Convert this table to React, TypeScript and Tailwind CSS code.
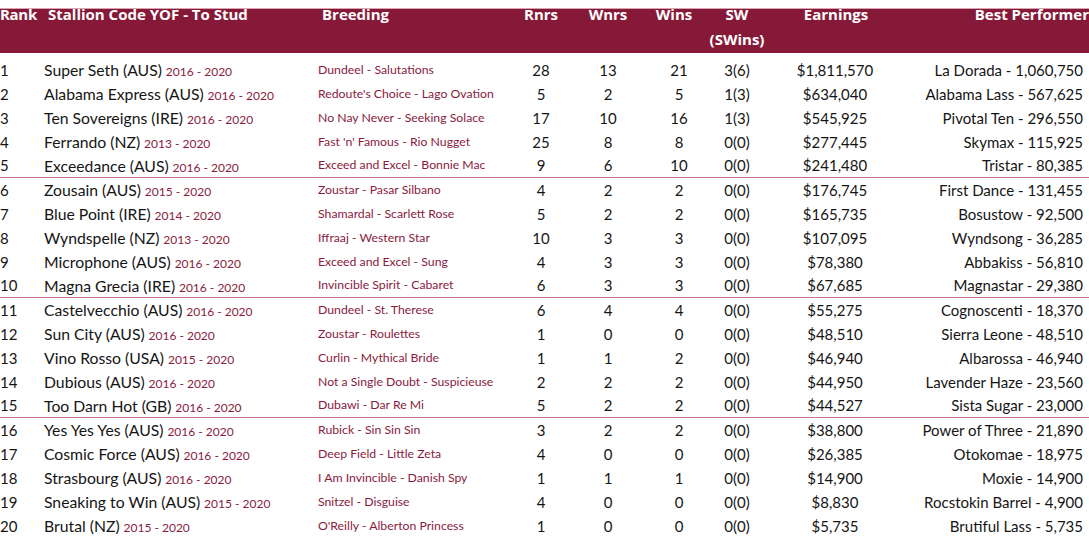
import React from 'react';

const rows = [
  ['1', 'Super Seth (AUS)', '2016 - 2020', 'Dundeel - Salutations', '28', '13', '21', '3(6)', '$1,811,570', 'La Dorada - 1,060,750'],
  ['2', 'Alabama Express (AUS)', '2016 - 2020', "Redoute's Choice - Lago Ovation", '5', '2', '5', '1(3)', '$634,040', 'Alabama Lass - 567,625'],
  ['3', 'Ten Sovereigns (IRE)', '2016 - 2020', 'No Nay Never - Seeking Solace', '17', '10', '16', '1(3)', '$545,925', 'Pivotal Ten - 296,550'],
  ['4', 'Ferrando (NZ)', '2013 - 2020', "Fast 'n' Famous - Rio Nugget", '25', '8', '8', '0(0)', '$277,445', 'Skymax - 115,925'],
  ['5', 'Exceedance (AUS)', '2016 - 2020', 'Exceed and Excel - Bonnie Mac', '9', '6', '10', '0(0)', '$241,480', 'Tristar - 80,385'],
  ['6', 'Zousain (AUS)', '2015 - 2020', 'Zoustar - Pasar Silbano', '4', '2', '2', '0(0)', '$176,745', 'First Dance - 131,455'],
  ['7', 'Blue Point (IRE)', '2014 - 2020', 'Shamardal - Scarlett Rose', '5', '2', '2', '0(0)', '$165,735', 'Bosustow - 92,500'],
  ['8', 'Wyndspelle (NZ)', '2013 - 2020', 'Iffraaj - Western Star', '10', '3', '3', '0(0)', '$107,095', 'Wyndsong - 36,285'],
  ['9', 'Microphone (AUS)', '2016 - 2020', 'Exceed and Excel - Sung', '4', '3', '3', '0(0)', '$78,380', 'Abbakiss - 56,810'],
  ['10', 'Magna Grecia (IRE)', '2016 - 2020', 'Invincible Spirit - Cabaret', '6', '3', '3', '0(0)', '$67,685', 'Magnastar - 29,380'],
  ['11', 'Castelvecchio (AUS)', '2016 - 2020', 'Dundeel - St. Therese', '6', '4', '4', '0(0)', '$55,275', 'Cognoscenti - 18,370'],
  ['12', 'Sun City (AUS)', '2016 - 2020', 'Zoustar - Roulettes', '1', '0', '0', '0(0)', '$48,510', 'Sierra Leone - 48,510'],
  ['13', 'Vino Rosso (USA)', '2015 - 2020', 'Curlin - Mythical Bride', '1', '1', '2', '0(0)', '$46,940', 'Albarossa - 46,940'],
  ['14', 'Dubious (AUS)', '2016 - 2020', 'Not a Single Doubt - Suspicieuse', '2', '2', '2', '0(0)', '$44,950', 'Lavender Haze - 23,560'],
  ['15', 'Too Darn Hot (GB)', '2016 - 2020', 'Dubawi - Dar Re Mi', '5', '2', '2', '0(0)', '$44,527', 'Sista Sugar - 23,000'],
  ['16', 'Yes Yes Yes (AUS)', '2016 - 2020', 'Rubick - Sin Sin Sin', '3', '2', '2', '0(0)', '$38,800', 'Power of Three - 21,890'],
  ['17', 'Cosmic Force (AUS)', '2016 - 2020', 'Deep Field - Little Zeta', '4', '0', '0', '0(0)', '$26,385', 'Otokomae - 18,975'],
  ['18', 'Strasbourg (AUS)', '2016 - 2020', 'I Am Invincible - Danish Spy', '1', '1', '1', '0(0)', '$14,900', 'Moxie - 14,900'],
  ['19', 'Sneaking to Win (AUS)', '2015 - 2020', 'Snitzel - Disguise', '4', '0', '0', '0(0)', '$8,830', 'Rocstokin Barrel - 4,900'],
  ['20', 'Brutal (NZ)', '2015 - 2020', "O'Reilly - Alberton Princess", '1', '0', '0', '0(0)', '$5,735', 'Brutiful Lass - 5,735'],
];

const App: React.FC = () => {
  return (
    <div className="w-[1089px] h-[555px] bg-white overflow-hidden font-['Lato',sans-serif] text-[#151515]">
      {/* header band */}
      <div className="mt-[8px] h-[45px] bg-[#861937] border-t border-[#d9a3b1] text-white font-bold text-[15px] font-['Open_Sans',sans-serif]">
        <div className="flex -mt-[7px] leading-[25px]">
          <div className="w-[44px] tracking-[-0.3px]">Rank</div>
          <div className="w-[274px] pl-[4px] whitespace-nowrap">Stallion Code YOF - To Stud</div>
          <div className="w-[192px] pl-[4px]">Breeding</div>
          <div className="w-[62px] text-center">Rnrs</div>
          <div className="w-[72px] text-center">Wnrs</div>
          <div className="w-[70px] text-center pr-[10px]">Wins</div>
          <div className="w-[46px] text-center whitespace-nowrap flex flex-col items-center">
            <span>SW</span>
            <span>(SWins)</span>
          </div>
          <div className="w-[150px] text-center pl-[2px]">Earnings</div>
          <div className="flex-1 text-right whitespace-nowrap">Best Performer</div>
        </div>
      </div>

      <div className="pt-[5px]">
        {rows.map((r, i) => (
          <div
            key={r[0]}
            className={
              'flex items-center h-[24px] text-[15px] ' +
              (i === 4 || i === 9 || i === 14 ? 'border-b border-[#c7738c]' : '')
            }
          >
            <div className="w-[44px]">{r[0]}</div>
            <div className="w-[274px] whitespace-nowrap">
              <span className="text-[15.75px]">{r[1]}</span>{' '}
              <span className="text-[12px] text-[#8a1a3c]">{r[2]}</span>
            </div>
            <div className="w-[192px] text-[12.25px] text-[#8a1a3c] whitespace-nowrap">{r[3]}</div>
            <div className="w-[62px] text-center">{r[4]}</div>
            <div className="w-[72px] text-center">{r[5]}</div>
            <div className="w-[70px] text-center">{r[6]}</div>
            <div className="w-[46px] text-center">{r[7]}</div>
            <div className="w-[150px] text-center">{r[8]}</div>
            <div className="flex-1 text-right pr-[6px] whitespace-nowrap">{r[9]}</div>
          </div>
        ))}
      </div>
    </div>
  );
};

export default App;
